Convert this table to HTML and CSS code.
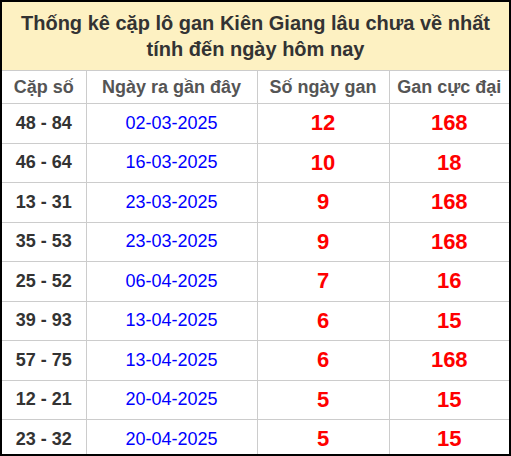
FILE: index.html
```html
<!DOCTYPE html>
<html lang="vi">
<head>
<meta charset="utf-8">
<link rel="stylesheet" href="styles.css">
</head>
<body>
<div class="box">
  <div class="title">Thống kê cặp lô gan Kiên Giang lâu chưa về nhất<br>tính đến ngày hôm nay</div>
  <table class="tbl">
    <colgroup><col class="c1"><col class="c2"><col class="c3"><col class="c4"></colgroup>
    <thead>
      <tr><th>Cặp số</th><th>Ngày ra gần đây</th><th>Số ngày gan</th><th>Gan cực đại</th></tr>
    </thead>
    <tbody>
      <tr><td class="pair">48 - 84</td><td class="date">02-03-2025</td><td class="num">12</td><td class="num">168</td></tr>
      <tr><td class="pair">46 - 64</td><td class="date">16-03-2025</td><td class="num">10</td><td class="num">18</td></tr>
      <tr><td class="pair">13 - 31</td><td class="date">23-03-2025</td><td class="num">9</td><td class="num">168</td></tr>
      <tr><td class="pair">35 - 53</td><td class="date">23-03-2025</td><td class="num">9</td><td class="num">168</td></tr>
      <tr><td class="pair">25 - 52</td><td class="date">06-04-2025</td><td class="num">7</td><td class="num">16</td></tr>
      <tr><td class="pair">39 - 93</td><td class="date">13-04-2025</td><td class="num">6</td><td class="num">15</td></tr>
      <tr><td class="pair">57 - 75</td><td class="date">13-04-2025</td><td class="num">6</td><td class="num">168</td></tr>
      <tr><td class="pair">12 - 21</td><td class="date">20-04-2025</td><td class="num">5</td><td class="num">15</td></tr>
      <tr><td class="pair">23 - 32</td><td class="date">20-04-2025</td><td class="num">5</td><td class="num">15</td></tr>
    </tbody>
  </table>
</div>
</body>
</html>
```

FILE: styles.css
```css
html, body {
  margin: 0;
  padding: 0;
  background: #fff;
}
.box {
  width: 511px;
  height: 456px;
  box-sizing: border-box;
  border: 2px solid #000;
  overflow: hidden;
  font-family: "Liberation Sans", Arial, sans-serif;
}
.title {
  background: #fdf1c2;
  color: #333;
  font-weight: bold;
  font-size: 20px;
  line-height: 26px;
  text-align: center;
  padding: 8px 0;
  border-bottom: 1px solid #ccc;
}
.tbl {
  width: 507px;
  border-collapse: collapse;
  table-layout: fixed;
}
.c1 { width: 84px; }
.c2 { width: 171px; }
.c3 { width: 132px; }
.c4 { width: 120px; }
.tbl th, .tbl td {
  border-right: 1px solid #ccc;
  border-bottom: 1px solid #ccc;
  padding: 0;
  text-align: center;
}
.tbl th:last-child, .tbl td:last-child {
  border-right: none;
}
.tbl th {
  height: 32px;
  color: #555;
  font-size: 18px;
  font-weight: bold;
}
.tbl td {
  height: 38.5px;
}
.pair {
  color: #333;
  font-size: 18px;
  font-weight: bold;
}
.date {
  color: #0000ff;
  font-size: 18px;
}
.num {
  color: #ff0000;
  font-size: 22px;
  font-weight: bold;
}
```
